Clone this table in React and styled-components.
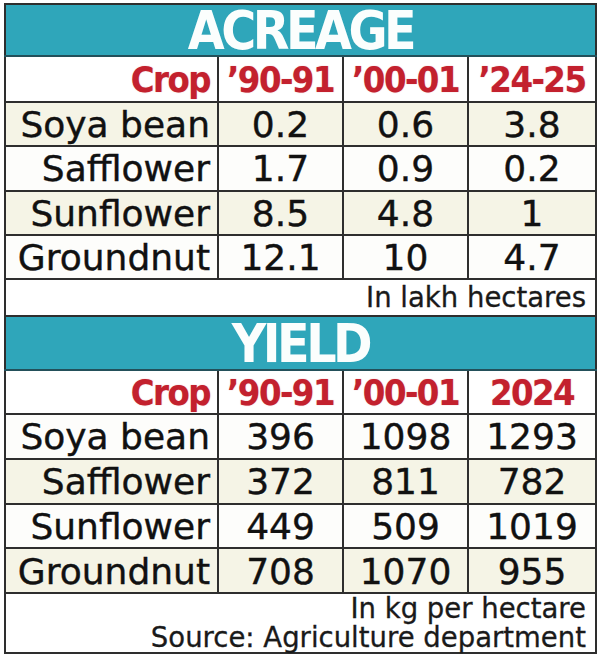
import React from 'react';
import styled, { createGlobalStyle } from 'styled-components';

const GlobalStyle = createGlobalStyle`
  html, body {
    margin: 0;
    padding: 0;
    background: #ffffff;
  }
  body {
    font-family: "DejaVu Sans", Verdana, sans-serif;
  }
`;

const Page = styled.div`
  width: 600px;
  height: 658px;
  padding: 3px 0 0 4px;
  box-sizing: border-box;
  background: #fff;
`;

const Table = styled.table`
  width: 591px;
  border-collapse: collapse;
  table-layout: fixed;
  border: 2px solid #2e2e2e;
`;

const Row = styled.tr`
  height: ${props => props.h}px;
  background: ${props => props.cream ? '#f5f4e6' : '#fdfdfb'};
`;

const BandCell = styled.td`
  background: #2fa6ba;
  border-bottom: 2px solid #23505a;
  padding: 2px 0 0 0;
  text-align: center;
  color: #fbfefd;
  font-family: "DejaVu Sans Condensed", "DejaVu Sans", sans-serif;
  font-weight: bold;
  font-size: 53px;
  letter-spacing: -3.5px;
  line-height: 44px;
  vertical-align: middle;
`;

const HeadCell = styled.td`
  border: 2px solid #2e2e2e;
  padding: ${props => props.right ? '2px 7px 0 0' : '2px 0 0 0'};
  text-align: ${props => props.right ? 'right' : 'center'};
  color: #c3212e;
  font-family: "DejaVu Sans Condensed", "DejaVu Sans", sans-serif;
  font-weight: bold;
  font-size: 36px;
  line-height: 38px;
  letter-spacing: -1.5px;
  text-shadow: 0 0 1px rgba(195, 33, 46, 0.5);
  vertical-align: middle;
  background: #fff;
`;

const CropCell = styled.td`
  border: 2px solid #2e2e2e;
  padding: 2px 7px 0 0;
  text-align: right;
  color: #111;
  font-size: 36px;
  line-height: 38px;
  -webkit-text-stroke: 0.4px #111;
  vertical-align: middle;
  white-space: nowrap;
`;

const ValueCell = styled.td`
  border: 2px solid #2e2e2e;
  padding: 2px 0 0 0;
  text-align: center;
  color: #111;
  font-size: 36px;
  line-height: 38px;
  -webkit-text-stroke: 0.4px #111;
  vertical-align: middle;
`;

const NoteCell = styled.td`
  border: 2px solid #2e2e2e;
  background: #fff;
  padding: ${props => props.pad || '0 9px 0 0'};
  text-align: right;
  color: #1a1a1a;
  font-size: 27.5px;
  line-height: 29px;
  -webkit-text-stroke: 0.3px #1a1a1a;
  vertical-align: ${props => props.bottom ? 'bottom' : 'middle'};
`;

const NoteLine = styled.div`
  white-space: nowrap;
`;

const acreage = [
    { crop: 'Soya bean', values: ['0.2', '0.6', '3.8'], cream: true },
    { crop: 'Safflower', values: ['1.7', '0.9', '0.2'] },
    { crop: 'Sunflower', values: ['8.5', '4.8', '1'], cream: true },
    { crop: 'Groundnut', values: ['12.1', '10', '4.7'] },
];

const yieldData = [
    { crop: 'Soya bean', values: ['396', '1098', '1293'] },
    { crop: 'Safflower', values: ['372', '811', '782'], cream: true },
    { crop: 'Sunflower', values: ['449', '509', '1019'] },
    { crop: 'Groundnut', values: ['708', '1070', '955'], cream: true },
];

function Section({ title, bandHeight, headHeight, years, rows, rowHeight }) {
    return (
        <>
            <Row h={bandHeight}>
                <BandCell colSpan={4}>{title}</BandCell>
            </Row>
            <Row h={headHeight}>
                <HeadCell right>Crop</HeadCell>
                {years.map(y => <HeadCell key={y}>{y}</HeadCell>)}
            </Row>
            {rows.map(r => (
                <Row key={r.crop} h={rowHeight} cream={r.cream}>
                    <CropCell>{r.crop}</CropCell>
                    {r.values.map((v, i) => <ValueCell key={i}>{v}</ValueCell>)}
                </Row>
            ))}
        </>
    );
}

export default function App() {
    return (
        <Page>
            <GlobalStyle />
            <Table>
                <colgroup>
                    <col style={{ width: '213px' }} />
                    <col style={{ width: '125px' }} />
                    <col style={{ width: '125px' }} />
                    <col style={{ width: '128px' }} />
                </colgroup>
                <tbody>
                    <Section
                        title="ACREAGE"
                        bandHeight={52}
                        headHeight={46}
                        years={['’90-91', '’00-01', '’24-25']}
                        rows={acreage}
                        rowHeight={44.25}
                    />
                    <Row h={37}>
                        <NoteCell colSpan={4}>In lakh hectares</NoteCell>
                    </Row>
                    <Section
                        title="YIELD"
                        bandHeight={54}
                        headHeight={44}
                        years={['’90-91', '’00-01', '2024']}
                        rows={yieldData}
                        rowHeight={44.75}
                    />
                    <Row h={59}>
                        <NoteCell colSpan={4} bottom pad="0 9px 0 0">
                            <NoteLine>In kg per hectare</NoteLine>
                            <NoteLine>Source: Agriculture department</NoteLine>
                        </NoteCell>
                    </Row>
                </tbody>
            </Table>
        </Page>
    );
}
